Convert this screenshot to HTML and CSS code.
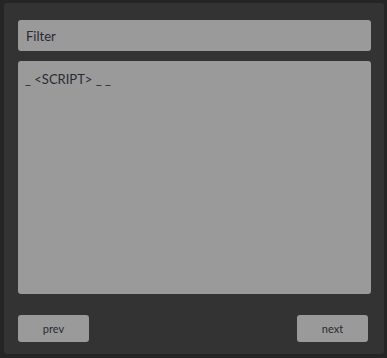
FILE: index.html
```html
<!DOCTYPE html>
<html>
<head>
<meta charset="utf-8">
<link rel="stylesheet" href="styles.css">
</head>
<body>
<div class="panel">
  <div class="filter">Filter</div>
  <div class="output">_ &lt;SCRIPT&gt; _ _</div>
  <div class="nav">
    <button class="btn">prev</button>
    <button class="btn">next</button>
  </div>
</div>
</body>
</html>
```
FILE: styles.css
```css
html, body {
  margin: 0;
  padding: 0;
  background: #252525;
  width: 387px;
  height: 358px;
  overflow: hidden;
}
body {
  padding: 3px 3px 4px 4px;
  box-sizing: border-box;
  font-family: "Lato", "Open Sans", sans-serif;
}
.panel {
  background: #333333;
  border-radius: 3px;
  height: 351px;
  box-sizing: border-box;
  padding: 17px 13px 0 14px;
  display: flex;
  flex-direction: column;
}
.filter {
  background: #9a9a9a;
  border-radius: 3px;
  height: 31px;
  box-sizing: border-box;
  padding: 1px 8px 0;
  display: flex;
  align-items: center;
  font-size: 13px;
  color: #2a2a33;
}
.output {
  margin-top: 10px;
  background: #9a9a9a;
  border-radius: 3px;
  height: 233px;
  box-sizing: border-box;
  padding: 10px 7px;
  font-size: 13px;
  color: #2a2a33;
  white-space: pre;
}
.nav {
  margin-top: 21px;
  display: flex;
  justify-content: space-between;
  padding-right: 3px;
}
.btn {
  width: 71px;
  height: 27px;
  background: #9a9a9a;
  border: none;
  border-radius: 3px;
  font-family: "Lato", "Open Sans", sans-serif;
  font-size: 11px;
  color: #2a2a33;
  padding: 0;
}
```
